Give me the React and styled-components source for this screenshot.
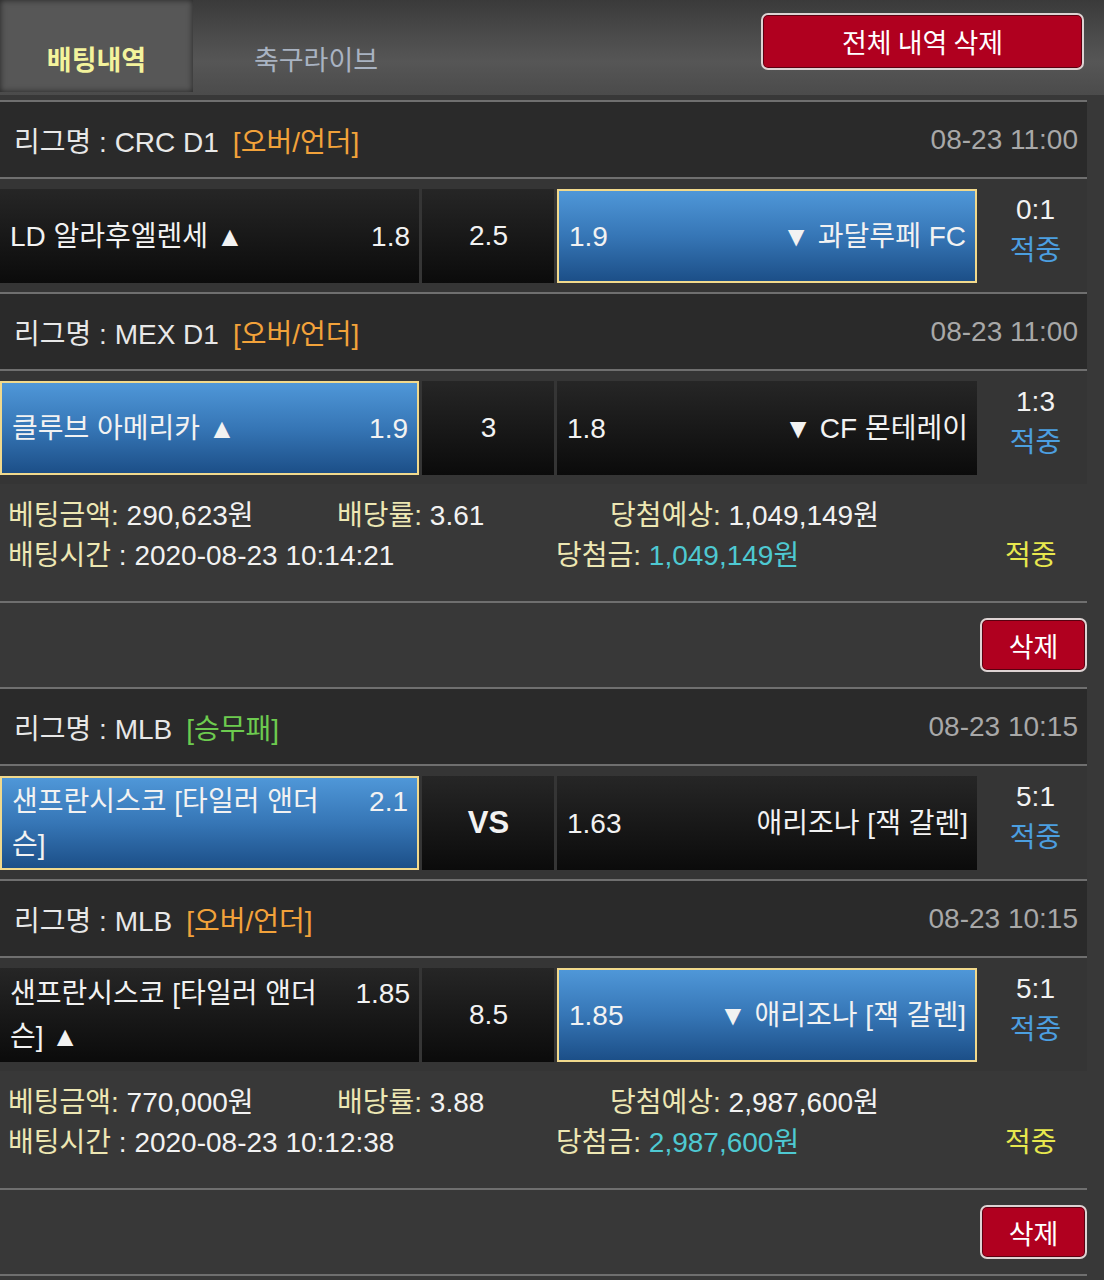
import styled, { createGlobalStyle, css } from "styled-components";

const GlobalStyle = createGlobalStyle`
  body {
    margin: 0;
    background: #383838;
  }
`;

const Page = styled.div`
  width: 1104px;
  min-height: 1280px;
  background: #383838;
  font-family: "Liberation Sans", "Noto Sans CJK KR", sans-serif;
  color: #f0f0f0;
`;

const TopBar = styled.div`
  height: 95px;
  display: flex;
  align-items: flex-start;
  background: linear-gradient(#3a3a3a 0%, #4a4a4a 35%, #565656 65%, #4b4b4b 100%);
`;

const Tab = styled.div`
  width: ${({ width }) => width}px;
  height: 92px;
  box-sizing: border-box;
  display: flex;
  align-items: center;
  justify-content: center;
  padding-top: 24px;
  font-family: "Noto Sans CJK KR", sans-serif;
  font-size: 27px;
  color: #a9b3c2;
  ${({ active }) =>
    active &&
    css`
      background: #575757;
      box-shadow: inset 0 0 6px rgba(0, 0, 0, 0.6);
      color: #f3f39c;
      font-weight: 700;
    `}
`;

const RedButton = styled.button`
  width: ${({ width }) => width}px;
  height: ${({ height }) => height}px;
  box-sizing: border-box;
  border: 2px solid #ddd3d3;
  border-radius: 7px;
  background: #b0001f;
  box-shadow: inset 0 0 0 1px #5a0010;
  color: #ffffff;
  font-family: "Noto Sans CJK KR", sans-serif;
  font-size: ${({ size }) => size}px;
  line-height: 1;
  padding: 0;
  cursor: pointer;
`;

const ClearAll = styled(RedButton)`
  margin: 13px 20px 0 auto;
`;

const Board = styled.div`
  width: 1087px;
  padding-top: 5px;
`;

const LeagueHeader = styled.div`
  height: 75px;
  border-top: 2px solid #6f6f6f;
  background: #2a2a2a;
  display: flex;
  align-items: center;
  padding: 0 9px 0 14px;
  font-size: 28px;
  color: #e8e8e8;
`;

const Tag = styled.span`
  margin-left: 14px;
  color: ${({ kind }) => (kind === "win" ? "#6dcb4f" : "#f2a23a")};
`;

const KickOff = styled.span`
  margin-left: auto;
  color: #a8a8a8;
`;

const MatchRow = styled.div`
  border-top: 2px solid #6f6f6f;
  display: grid;
  grid-template-columns: 419px 132px 420px 1fr;
  column-gap: 3px;
  padding: 10px 0 9px;
  background: #353535;
`;

const Cell = styled.div`
  height: 94px;
  box-sizing: border-box;
  display: flex;
  align-items: center;
  justify-content: ${({ center }) => (center ? "center" : "flex-start")};
  padding: 0 9px 0 10px;
  font-size: 28px;
  color: #f2f2f2;
  background: linear-gradient(#262626, #0b0b0b);
  ${({ picked }) =>
    picked &&
    css`
      border: 2px solid #f1d98c;
      background: linear-gradient(#4f97d8 0%, #3676b6 50%, #1c4f88 100%);
    `}
`;

const Side = styled.div`
  flex: 1;
  display: flex;
  align-items: flex-start;
  justify-content: space-between;
  line-height: 43px;
`;

const TeamName = styled.span`
  max-width: 335px;
  text-align: ${({ right }) => (right ? "right" : "left")};
`;

const Odds = styled.span`
  flex-shrink: 0;
`;

const Vs = styled.span`
  font-weight: 700;
  font-size: 31px;
`;

const Score = styled.div`
  display: flex;
  flex-direction: column;
  align-items: center;
  justify-content: center;
  padding: 0 0 12px 4px;
  font-size: 28px;
  line-height: 41px;
  color: #f2f2f2;
`;

const Hit = styled.span`
  color: #4c9fe0;
`;

const Info = styled.div`
  padding: 12px 0 25px;
  background: #383838;
  font-size: 28px;
  line-height: 40px;
`;

const InfoLine = styled.div`
  display: grid;
  grid-template-columns: ${({ cols }) => cols};
  padding-left: 8px;
  height: 40px;
  white-space: nowrap;
`;

const Label = styled.span`
  color: #ede7b3;
`;

const Value = styled.span`
  color: ${({ tone }) => (tone === "cyan" ? "#4ec9d2" : "#f2f2f2")};
`;

const Status = styled.span`
  color: #e8e84e;
`;

const DeleteBar = styled.div`
  height: 84px;
  border-top: 2px solid #6f6f6f;
  border-bottom: 2px solid #6f6f6f;
  margin-bottom: -2px;
  display: flex;
  align-items: center;
  justify-content: flex-end;
`;

const groups = [
  {
    matches: [
      {
        league: "CRC D1",
        tag: "[오버/언더]",
        time: "08-23 11:00",
        home: { name: "LD 알라후엘렌세 ▲", odds: "1.8" },
        mid: "2.5",
        away: { name: "▼ 과달루페 FC", odds: "1.9" },
        pick: "away",
        score: "0:1",
      },
      {
        league: "MEX D1",
        tag: "[오버/언더]",
        time: "08-23 11:00",
        home: { name: "클루브 아메리카 ▲", odds: "1.9" },
        mid: "3",
        away: { name: "▼ CF 몬테레이", odds: "1.8" },
        pick: "home",
        score: "1:3",
      },
    ],
    info: {
      amount: "290,623원",
      rate: "3.61",
      expect: "1,049,149원",
      time: "2020-08-23 10:14:21",
      win: "1,049,149원",
    },
  },
  {
    matches: [
      {
        league: "MLB",
        tag: "[승무패]",
        kind: "win",
        time: "08-23 10:15",
        home: { name: "샌프란시스코 [타일러 앤더슨]", odds: "2.1" },
        mid: "VS",
        away: { name: "애리조나 [잭 갈렌]", odds: "1.63" },
        pick: "home",
        score: "5:1",
      },
      {
        league: "MLB",
        tag: "[오버/언더]",
        time: "08-23 10:15",
        home: { name: "샌프란시스코 [타일러 앤더슨] ▲", odds: "1.85" },
        mid: "8.5",
        away: { name: "▼ 애리조나 [잭 갈렌]", odds: "1.85" },
        pick: "away",
        score: "5:1",
      },
    ],
    info: {
      amount: "770,000원",
      rate: "3.88",
      expect: "2,987,600원",
      time: "2020-08-23 10:12:38",
      win: "2,987,600원",
    },
  },
];

function Match({ m }) {
  return (
    <>
      <LeagueHeader>
        리그명 : {m.league}
        <Tag kind={m.kind}>{m.tag}</Tag>
        <KickOff>{m.time}</KickOff>
      </LeagueHeader>
      <MatchRow>
        <Cell picked={m.pick === "home"}>
          <Side>
            <TeamName>{m.home.name}</TeamName>
            <Odds>{m.home.odds}</Odds>
          </Side>
        </Cell>
        <Cell center>{m.mid === "VS" ? <Vs>VS</Vs> : m.mid}</Cell>
        <Cell picked={m.pick === "away"}>
          <Side>
            <Odds>{m.away.odds}</Odds>
            <TeamName right>{m.away.name}</TeamName>
          </Side>
        </Cell>
        <Score>
          <span>{m.score}</span>
          <Hit>적중</Hit>
        </Score>
      </MatchRow>
    </>
  );
}

function BetGroup({ group }) {
  const { info } = group;
  return (
    <>
      {group.matches.map((m, i) => (
        <Match key={i} m={m} />
      ))}
      <Info>
        <InfoLine cols="329px 273px 1fr">
          <span>
            <Label>베팅금액:</Label> <Value>{info.amount}</Value>
          </span>
          <span>
            <Label>배당률:</Label> <Value>{info.rate}</Value>
          </span>
          <span>
            <Label>당첨예상:</Label> <Value>{info.expect}</Value>
          </span>
        </InfoLine>
        <InfoLine cols="548px 449px auto">
          <span>
            <Label>배팅시간</Label> <Value>: {info.time}</Value>
          </span>
          <span>
            <Label>당첨금:</Label> <Value tone="cyan">{info.win}</Value>
          </span>
          <Status>적중</Status>
        </InfoLine>
      </Info>
      <DeleteBar>
        <RedButton width={107} height={54} size={27}>
          삭제
        </RedButton>
      </DeleteBar>
    </>
  );
}

export default function App() {
  return (
    <Page>
      <GlobalStyle />
      <TopBar>
        <Tab width={193} active>
          배팅내역
        </Tab>
        <Tab width={246}>축구라이브</Tab>
        <ClearAll width={323} height={57} size={27}>
          전체 내역 삭제
        </ClearAll>
      </TopBar>
      <Board>
        {groups.map((g, i) => (
          <BetGroup key={i} group={g} />
        ))}
      </Board>
    </Page>
  );
}
